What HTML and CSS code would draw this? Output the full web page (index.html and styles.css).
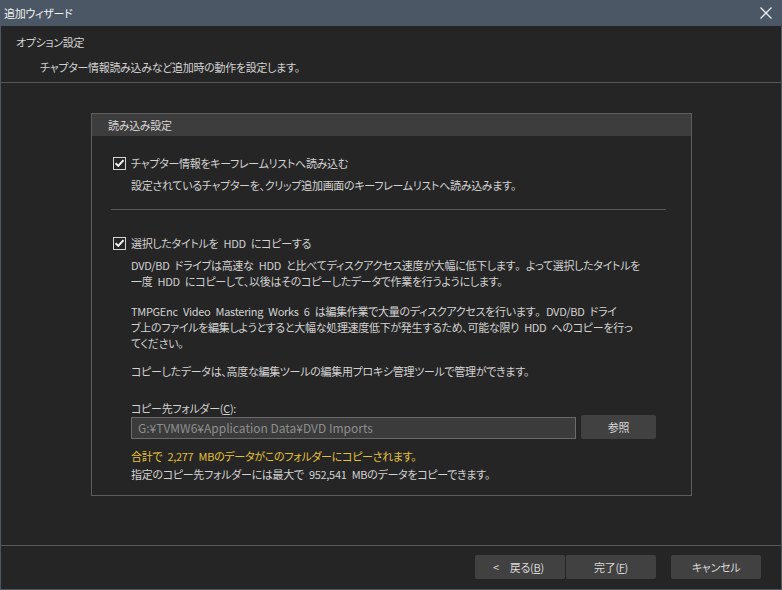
FILE: index.html
```html
<!DOCTYPE html>
<html lang="ja">
<head>
<meta charset="utf-8">
<title>追加ウィザード</title>
<link rel="stylesheet" href="styles.css">
</head>
<body>
<div class="window">
  <div class="titlebar">
    <span class="title">追加ウィザード</span>
    <svg class="close" width="12" height="12" viewBox="0 0 12 12"><path d="M0.5 0.5 L11.5 11.5 M11.5 0.5 L0.5 11.5" stroke="#e8ecf0" stroke-width="1.3" fill="none"/></svg>
  </div>
  <div class="header">
    <div class="h-title">オプション設定</div>
    <div class="h-sub">チャプター情報読み込みなど追加時の動作を設定します。</div>
  </div>
  <div class="content">
    <div class="group">
      <div class="group-head">読み込み設定</div>
      <div class="group-body">
        <div class="check-row">
          <span class="checkbox"><svg width="13" height="13" viewBox="0 0 13 13"><rect x="0.5" y="0.5" width="12" height="12" fill="none" stroke="#d6d6d6"/><path d="M2.6 6.2 L5.3 8.9 L10.5 3.2" stroke="#f4f4f4" stroke-width="2" fill="none"/></svg></span>
          <span>チャプター情報をキーフレームリストへ読み込む</span>
        </div>
        <div class="desc first-desc">設定されているチャプターを、クリップ追加画面のキーフレームリストへ読み込みます。</div>
        <div class="divider"></div>
        <div class="check-row">
          <span class="checkbox"><svg width="13" height="13" viewBox="0 0 13 13"><rect x="0.5" y="0.5" width="12" height="12" fill="none" stroke="#d6d6d6"/><path d="M2.6 6.2 L5.3 8.9 L10.5 3.2" stroke="#f4f4f4" stroke-width="2" fill="none"/></svg></span>
          <span>選択したタイトルを HDD にコピーする</span>
        </div>
        <div class="desc">DVD/BD ドライブは高速な HDD と比べてディスクアクセス速度が大幅に低下します<span class="fw">。</span>よって選択したタイトルを<br>一度 HDD にコピーして、以後はそのコピーしたデータで作業を行うようにします。</div>
        <div class="desc para">TMPGEnc Video Mastering Works 6 は編集作業で大量のディスクアクセスを行います<span class="fw">。</span>DVD/BD ドライ<br>ブ上のファイルを編集しようとすると大幅な処理速度低下が発生するため、可能な限り HDD へのコピーを行っ<br>てください。</div>
        <div class="desc para">コピーしたデータは、高度な編集ツールの編集用プロキシ管理ツールで管理ができます。</div>
        <div class="desc folder-label">コピー先フォルダー(<u>C</u>):</div>
        <div class="folder-row">
          <div class="input">G:¥TVMW6¥Application Data¥DVD Imports</div>
          <div class="btn browse">参照</div>
        </div>
        <div class="desc note-yellow">合計で 2,277 MBのデータがこのフォルダーにコピーされます。</div>
        <div class="desc note">指定のコピー先フォルダーには最大で 952,541 MBのデータをコピーできます。</div>
      </div>
    </div>
  </div>
  <div class="footer">
    <div class="btn-pair">
      <div class="btn back"><span class="lt">&lt;</span>戻る(<u>B</u>)</div>
      <div class="btn finish">完了(<u>F</u>)</div>
    </div>
    <div class="btn cancel">キャンセル</div>
  </div>
</div>
</body>
</html>
```

FILE: styles.css
```css
* { box-sizing: border-box; }
html, body { margin: 0; padding: 0; background: #252525; }
body {
  font-family: "Noto Sans CJK JP", "Noto Sans", sans-serif;
  font-size: 11px;
  letter-spacing: -0.3px;
  word-spacing: 3px;
  line-height: 16px;
  color: #d2d2d2;
  font-feature-settings: "palt";
}
.fw { font-feature-settings: normal; }
.window {
  width: 782px;
  height: 590px;
  border: 1px solid #4b5765;
  border-top: none;
  display: flex;
  flex-direction: column;
  background: #252525;
}
.titlebar {
  height: 26px;
  background: #4b5765;
  display: flex;
  align-items: center;
  justify-content: space-between;
  padding: 0 9px 0 3px;
  color: #f2f2f2;
  flex: none;
}
.close { display: block; }
.header {
  padding: 8px 0 7px 15px;
  border-bottom: 1px solid #575757;
  flex: none;
}
.h-sub { margin-top: 9px; padding-left: 24px; }
.content {
  flex: 1;
  padding: 30px 0 0 90px;
}
.group {
  width: 601px;
  height: 383px;
  border: 1px solid #5c5c5c;
}
.group-head {
  height: 22px;
  background: #3d3d3d;
  padding-left: 16px;
  display: flex;
  align-items: center;
  color: #d6d6d6;
}
.group-body { padding: 19px 0 0 21px; }
.check-row {
  display: flex;
  align-items: center;
  height: 16px;
}
.checkbox { width: 13px; height: 13px; margin-right: 5px; display: block; }
.checkbox svg { display: block; }
.desc { padding-left: 18px; white-space: nowrap; }
.first-desc { margin-top: 5px; }
.divider {
  height: 1px;
  background: #575757;
  margin: 16px 25px 25px -2px;
}
.check-row + .desc { margin-top: 6px; }
.para { margin-top: 14px; }
.para + .para { margin-top: 12px; }
.folder-label { margin-top: 21px; }
.folder-row {
  display: flex;
  align-items: flex-end;
  margin-left: 18px;
  margin-top: -1px;
  gap: 5px;
}
.input {
  width: 445px;
  height: 22px;
  background: #3b3b3b;
  border: 1px solid #6a6a6a;
  color: #8e8e8e;
  padding: 0 6px;
  display: flex;
  align-items: center;
  font-size: 12px;
  letter-spacing: 0;
  word-spacing: 0;
}
.btn {
  background: #414141;
  border-radius: 2px;
  display: flex;
  align-items: center;
  justify-content: center;
  color: #d8d8d8;
}
.browse { width: 75px; height: 24px; }
.note-yellow { color: #e6c13a; margin-top: 9px; }
.note { margin-top: 2px; }
.footer {
  flex: none;
  height: 44px;
  border-top: 1px solid #575757;
  display: flex;
  justify-content: flex-end;
  align-items: flex-start;
  padding: 9px 20px 0 0;
  gap: 15px;
}
.btn-pair { display: flex; gap: 1px; }
.back, .finish, .cancel { width: 90px; height: 24px; word-spacing: 0; }
.back { justify-content: flex-start; padding-left: 18px; }
.lt { margin-right: 11px; }
```
